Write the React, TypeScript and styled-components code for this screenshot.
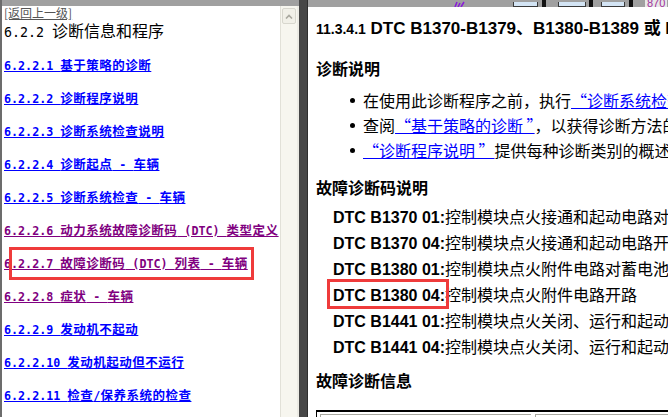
import React from 'react'
import styled, { createGlobalStyle } from 'styled-components'

const GlobalStyle = createGlobalStyle`
  html, body {
    margin: 0;
    padding: 0;
    background: #ffffff;
    overflow: hidden;
  }
`

// 中文字段（和半角数字分开排版）
const CjkRun = styled.span``

const CJK_RE = /([\u3000-\u303f\u4e00-\u9fff\uff00-\uffef]+)/

const Mixed: React.FC<{ text: string }> = ({ text }) => (
  <>
    {text.split(CJK_RE).map((part, i) =>
      i % 2 === 1 ? <CjkRun key={i}>{part}</CjkRun> : part
    )}
  </>
)

// 整个窗口
const Frame = styled.div`
  display: flex;
  width: 668px;
  height: 417px;
  overflow: hidden;
  background: #ffffff;
`

// 左侧目录面板
const LeftPane = styled.div`
  flex: none;
  width: 299px;
  box-sizing: border-box;
  display: flex;
  flex-direction: column;
  border-left: 2px solid #6c6c6c;
`

const Strip = styled.div<{ $h: number }>`
  flex: none;
  height: ${({ $h }) => $h}px;
  background: #a0a0a0;
  display: flex;
  align-items: flex-end;
  overflow: hidden;
`

const LeftBody = styled.div`
  flex: 1;
  display: flex;
  min-height: 0;
`

const TocContent = styled.div`
  flex: 1;
  padding-left: 2px;
  overflow: hidden;
  white-space: nowrap;
  font-family: "DejaVu Sans Mono", "Noto Sans CJK SC", monospace;
`

const BackLink = styled.a`
  display: block;
  height: 14px;
  line-height: 14px;
  font-size: 12px;
  color: #555555;
  text-decoration: underline;
  font-family: "Noto Sans CJK SC", sans-serif;
`

const TocTitle = styled.div`
  height: 20px;
  line-height: 20px;
  font-size: 13.3px;
  color: #000000;

  ${CjkRun} {
    font-family: "Noto Sans CJK SC", sans-serif;
    font-size: 16px;
  }
`

const TocList = styled.div`
  margin-top: 8px;
`

const TocItem = styled.div`
  position: relative;
  height: 33px;
  line-height: 33px;
`

const TocLink = styled.a<{ $visited?: boolean }>`
  font-size: 11.7px;
  font-weight: bold;
  color: ${({ $visited }) => ($visited ? '#800080' : '#0000ff')};
  text-decoration: underline;

  ${CjkRun} {
    font-family: "Noto Sans CJK SC", sans-serif;
    font-size: 12.5px;
    letter-spacing: 0.5px;
  }
`

// 红色标注框
const MarkBox = styled.span`
  position: absolute;
  left: 5px;
  top: 1px;
  width: 245px;
  height: 33px;
  box-sizing: border-box;
  border: 3px solid #ef3b3b;
  pointer-events: none;
`

// 滚动条
const Scrollbar = styled.div`
  flex: none;
  width: 16px;
  background: #f7f6ef;
  border-left: 1px solid #e2e1d8;
  border-right: 2px solid #ecebe4;
  display: flex;
  flex-direction: column;
  align-items: center;
`

const ScrollButton = styled.div`
  margin-top: 2px;
  width: 14px;
  height: 16px;
  box-sizing: border-box;
  border: 1px solid #d8d7ce;
  border-radius: 2px;
  background: #f1f0e8;
  display: flex;
  align-items: center;
  justify-content: center;
`

const Divider = styled.div`
  flex: none;
  width: 8px;
  background: #474747;
`

// 右侧正文面板
const RightPane = styled.div`
  flex: 1;
  min-width: 0;
  display: flex;
  flex-direction: column;
  border-left: 1px solid #2e2e2e;
`

const ToolPiece = styled.div<{ $ml: number; $w: number }>`
  flex: none;
  margin-left: ${({ $ml }) => $ml}px;
  width: ${({ $w }) => $w}px;
  height: 5px;
  box-sizing: border-box;
  background: #d3e4f4;
  border: 1px solid #3a3a3a;
  border-top: none;
`

const ToolSep = styled.div<{ $ml: number }>`
  flex: none;
  margin-left: ${({ $ml }) => $ml}px;
  width: 4px;
  height: 7px;
  background: #111111;
`

const PageNo = styled.div<{ $ml: number }>`
  flex: none;
  margin-left: ${({ $ml }) => $ml}px;
  height: 7px;
  line-height: 7px;
  overflow: hidden;
  font-family: "Liberation Sans", sans-serif;
  font-size: 11px;
  color: #a0309a;
  background: #e8e8e8;
  padding: 0 2px;
`

const Doc = styled.div`
  flex: 1;
  padding: 12px 0 0 8px;
  overflow: hidden;
  white-space: nowrap;
  color: #000000;
  font-family: "Noto Sans CJK SC", sans-serif;
`

const Title = styled.div`
  height: 20px;
  line-height: 20px;
  font-family: "Liberation Sans", "Noto Sans CJK SC", sans-serif;
  font-weight: bold;
  font-size: 17px;
`

const TitleNum = styled.span`
  font-size: 14px;
`

const Heading = styled.div<{ $mt: number }>`
  margin-top: ${({ $mt }) => $mt}px;
  height: 22px;
  line-height: 22px;
  font-size: 16px;
  font-weight: bold;
`

const Bullets = styled.ul`
  list-style: none;
  margin: 9px 0 0;
  padding: 0;
`

const BulletRow = styled.li`
  display: flex;
  align-items: center;
  height: 25px;
  line-height: 25px;
  font-size: 16px;
`

const Dot = styled.span`
  flex: none;
  width: 5px;
  height: 5px;
  border-radius: 50%;
  background: #000000;
  margin: 0 8px 0 34px;
`

const DocLink = styled.a`
  color: #0000ff;
  text-decoration: underline;
`

const DtcList = styled.div`
  margin-top: 5px;
`

const DtcRow = styled.div`
  height: 26px;
  line-height: 26px;
  padding-left: 17px;
  font-size: 16px;
`

const DtcCode = styled.span<{ $marked?: boolean }>`
  position: relative;
  display: inline-block;
  font-family: "Liberation Sans", sans-serif;
  font-weight: bold;

  ${({ $marked }) =>
    $marked &&
    `
    &::after {
      content: '';
      position: absolute;
      left: -6px;
      right: -4px;
      top: -4px;
      bottom: 0;
      border: 3px solid #ef3b3b;
    }
  `}
`

const InfoTable = styled.div`
  margin-top: 19px;
  display: flex;
  gap: 4px;
  width: 600px;
  padding: 2px 0 0 3px;
  border-top: 2px solid #000000;
  border-left: 1px solid #000000;
`

const InfoCell = styled.div<{ $w: number }>`
  flex: none;
  width: ${({ $w }) => $w}px;
  height: 20px;
  border-top: 1px solid #a8a8a0;
  border-left: 1px solid #a8a8a0;
`

const tocItems = [
  { text: '6.2.2.1 基于策略的诊断' },
  { text: '6.2.2.2 诊断程序说明' },
  { text: '6.2.2.3 诊断系统检查说明' },
  { text: '6.2.2.4 诊断起点 - 车辆' },
  { text: '6.2.2.5 诊断系统检查 - 车辆' },
  { text: '6.2.2.6 动力系统故障诊断码 (DTC) 类型定义', visited: true },
  { text: '6.2.2.7 故障诊断码 (DTC) 列表 - 车辆', visited: true, marked: true },
  { text: '6.2.2.8 症状 - 车辆', visited: true },
  { text: '6.2.2.9 发动机不起动' },
  { text: '6.2.2.10 发动机起动但不运行' },
  { text: '6.2.2.11 检查/保养系统的检查' },
]

const dtcRows = [
  { code: 'DTC B1370 01:', desc: '控制模块点火接通和起动电路对搭铁短路' },
  { code: 'DTC B1370 04:', desc: '控制模块点火接通和起动电路开路' },
  { code: 'DTC B1380 01:', desc: '控制模块点火附件电路对蓄电池短路' },
  { code: 'DTC B1380 04:', desc: '控制模块点火附件电路开路', marked: true },
  { code: 'DTC B1441 01:', desc: '控制模块点火关闭、运行和起动电路对蓄电池短路' },
  { code: 'DTC B1441 04:', desc: '控制模块点火关闭、运行和起动电路开路' },
]

export default function App() {
  return (
    <>
      <GlobalStyle />
      <Frame>
        {/* 左侧目录 */}
        <LeftPane>
          <Strip $h={6} />
          <LeftBody>
            <TocContent>
              <BackLink>[返回上一级]</BackLink>
              <TocTitle>
                <Mixed text="6.2.2 诊断信息和程序" />
              </TocTitle>
              <TocList>
                {tocItems.map((item) => (
                  <TocItem key={item.text}>
                    <TocLink $visited={item.visited}>
                      <Mixed text={item.text} />
                    </TocLink>
                    {item.marked && <MarkBox />}
                  </TocItem>
                ))}
              </TocList>
            </TocContent>
            <Scrollbar>
              <ScrollButton>
                <svg width="8" height="5" viewBox="0 0 8 5">
                  <path d="M1 4.5 L4 1.5 L7 4.5" fill="none" stroke="#a9a89f" strokeWidth="1.6" />
                </svg>
              </ScrollButton>
            </Scrollbar>
          </LeftBody>
        </LeftPane>

        <Divider />

        {/* 右侧正文 */}
        <RightPane>
          <Strip $h={7}>
            <svg width="14" height="7" viewBox="0 0 14 7" style={{ marginLeft: 145, flex: 'none' }}>
              <path d="M2 7 L4 2 M5 7 L7 3 M8 7 L11 2" stroke="#8a1fd8" strokeWidth="1.6" />
            </svg>
            <ToolPiece $ml={46} $w={25} />
            <ToolSep $ml={4} />
            <ToolPiece $ml={12} $w={28} />
            <ToolSep $ml={3} />
            <ToolPiece $ml={8} $w={24} />
            <ToolSep $ml={4} />
            <PageNo $ml={12}>870</PageNo>
          </Strip>
          <Doc>
            <Title>
              <TitleNum>11.3.4.1</TitleNum> DTC B1370-B1379、B1380-B1389 或 B1441
            </Title>

            <Heading $mt={18}>诊断说明</Heading>
            <Bullets>
              <BulletRow>
                <Dot />
                <span>
                  在使用此诊断程序之前，执行<DocLink>“诊断系统检查 - 车辆”</DocLink>。
                </span>
              </BulletRow>
              <BulletRow>
                <Dot />
                <span>
                  查阅<DocLink>“基于策略的诊断 ”</DocLink>，以获得诊断方法的概述。
                </span>
              </BulletRow>
              <BulletRow>
                <Dot />
                <span>
                  <DocLink>“诊断程序说明 ”</DocLink>提供每种诊断类别的概述。
                </span>
              </BulletRow>
            </Bullets>

            <Heading $mt={13}>故障诊断码说明</Heading>
            <DtcList>
              {dtcRows.map((row) => (
                <DtcRow key={row.code}>
                  <DtcCode $marked={row.marked}>{row.code}</DtcCode>
                  {row.desc}
                </DtcRow>
              ))}
            </DtcList>

            <Heading $mt={10}>故障诊断信息</Heading>
            <InfoTable>
              <InfoCell $w={210} />
              <InfoCell $w={380} />
            </InfoTable>
          </Doc>
        </RightPane>
      </Frame>
    </>
  )
}
